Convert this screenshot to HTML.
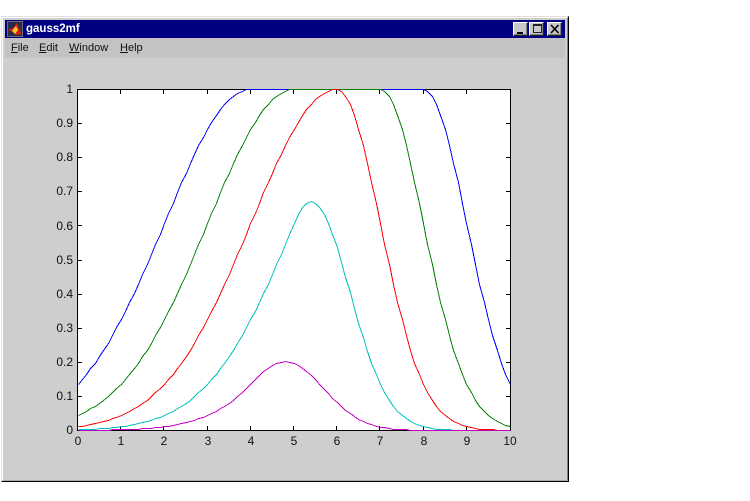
<!DOCTYPE html>
<html><head><meta charset="utf-8"><style>
html,body{margin:0;padding:0;width:750px;height:501px;background:#fff;overflow:hidden}
body{position:relative;font-family:"Liberation Sans",sans-serif}
div{position:absolute;box-sizing:border-box}
.t{font-size:12px;color:#111;line-height:13px;white-space:nowrap}
.y{width:30px;left:43px;text-align:right}
.x{width:30px;text-align:center;top:435px}
.m{top:41px;font-size:11px;line-height:14px;color:#111;white-space:nowrap}
.b{top:22px;width:15px;height:14px;background:#c8c8c8;border:1px solid;border-color:#fff #222 #222 #fff;box-shadow:inset -1px -1px 0 #808080}
svg{position:absolute;left:0;top:0}
</style></head><body>
<div style="left:1px;top:16px;width:568px;height:466px;background:#cecece;border:1px solid;border-color:#e0e0e0 #000 #000 #e0e0e0"></div>
<div style="left:2px;top:17px;width:566px;height:464px;border:1px solid;border-color:#fff #808080 #aaa #fff"></div>
<div style="left:5px;top:20px;width:560px;height:18px;background:#000080"></div>
<div style="left:5px;top:38px;width:560px;height:20px;background:#c4c2c4"></div>
<svg width="750" height="501" viewBox="0 0 750 501">
<rect x="7.5" y="21.5" width="15" height="15" fill="#2c2c48" stroke="#6a6a70"/>
<path d="M8 30L13 28L17 23L20 31L22 34L16 35L13 32Z" fill="#d82010"/>
<path d="M12 31L16 26L18 30L15 34Z" fill="#f8c830"/>
</svg>
<div style="left:26px;top:22px;color:#fff;font-weight:bold;font-size:11.5px;line-height:14px">gauss2mf</div>
<div class="b" style="left:513px"><div style="left:3px;top:9px;width:6px;height:2px;background:#000"></div></div>
<div class="b" style="left:529px"><div style="left:3px;top:1px;width:9px;height:9px;border:1px solid #222;border-top-width:2px"></div></div>
<div class="b" style="left:547px"><svg width="13" height="12" viewBox="0 0 13 12"><path d="M3 2L10.5 10M10.5 2L3 10" stroke="#000" stroke-width="1.6" fill="none"/></svg></div>
<div class="m" style="left:11px"><u>F</u>ile</div>
<div class="m" style="left:39px"><u>E</u>dit</div>
<div class="m" style="left:69px"><u>W</u>indow</div>
<div class="m" style="left:120px"><u>H</u>elp</div>
<div style="left:77px;top:89px;width:434px;height:342px;background:#fff;border:1px solid #000"></div>
<svg id="plot" width="750" height="501" viewBox="0 0 750 501" shape-rendering="crispEdges"></svg>
<div class="t y" style="top:83px">1</div>
<div class="t y" style="top:117px">0.9</div>
<div class="t y" style="top:151px">0.8</div>
<div class="t y" style="top:185px">0.7</div>
<div class="t y" style="top:220px">0.6</div>
<div class="t y" style="top:254px">0.5</div>
<div class="t y" style="top:288px">0.4</div>
<div class="t y" style="top:322px">0.3</div>
<div class="t y" style="top:356px">0.2</div>
<div class="t y" style="top:390px">0.1</div>
<div class="t y" style="top:424px">0</div>
<div class="t x" style="left:63px">0</div>
<div class="t x" style="left:106px">1</div>
<div class="t x" style="left:149px">2</div>
<div class="t x" style="left:193px">3</div>
<div class="t x" style="left:236px">4</div>
<div class="t x" style="left:279px">5</div>
<div class="t x" style="left:322px">6</div>
<div class="t x" style="left:365px">7</div>
<div class="t x" style="left:409px">8</div>
<div class="t x" style="left:452px">9</div>
<div class="t x" style="left:495px">10</div>
<script>
var s='',i;
for(i=0;i<=10;i++){var X=Math.floor(77.5+43.2*i),Y=Math.floor(89.5+34.1*i);
if(i>0&&i<10){s+='<rect x="'+X+'" y="90" width="1" height="4"/><rect x="'+X+'" y="426" width="1" height="4"/><rect x="78" y="'+Y+'" width="4" height="1"/><rect x="506" y="'+Y+'" width="4" height="1"/>';}}
var c=[[4,8,'#00f'],[5,7,'#007f00'],[6,6,'#f00'],[7,5,'#00bfbf'],[8,4,'#bf00bf']];
c.forEach(function(k){var d='';
for(i=0;i<=100;i++){var x=i/10,a=x<k[0]?Math.exp(-(x-k[0])*(x-k[0])/8):1,b=x>k[1]?Math.exp(-(x-k[1])*(x-k[1])/2):1,y=a*b;
d+=(i?'L':'M')+Math.round(77.5+43.2*x)+'.5 '+Math.round(430-341*y)+'.5';}
s+='<path d="'+d+'" stroke="'+k[2]+'" fill="none"/>';});
document.getElementById('plot').innerHTML=s;
</script>
</body></html>
